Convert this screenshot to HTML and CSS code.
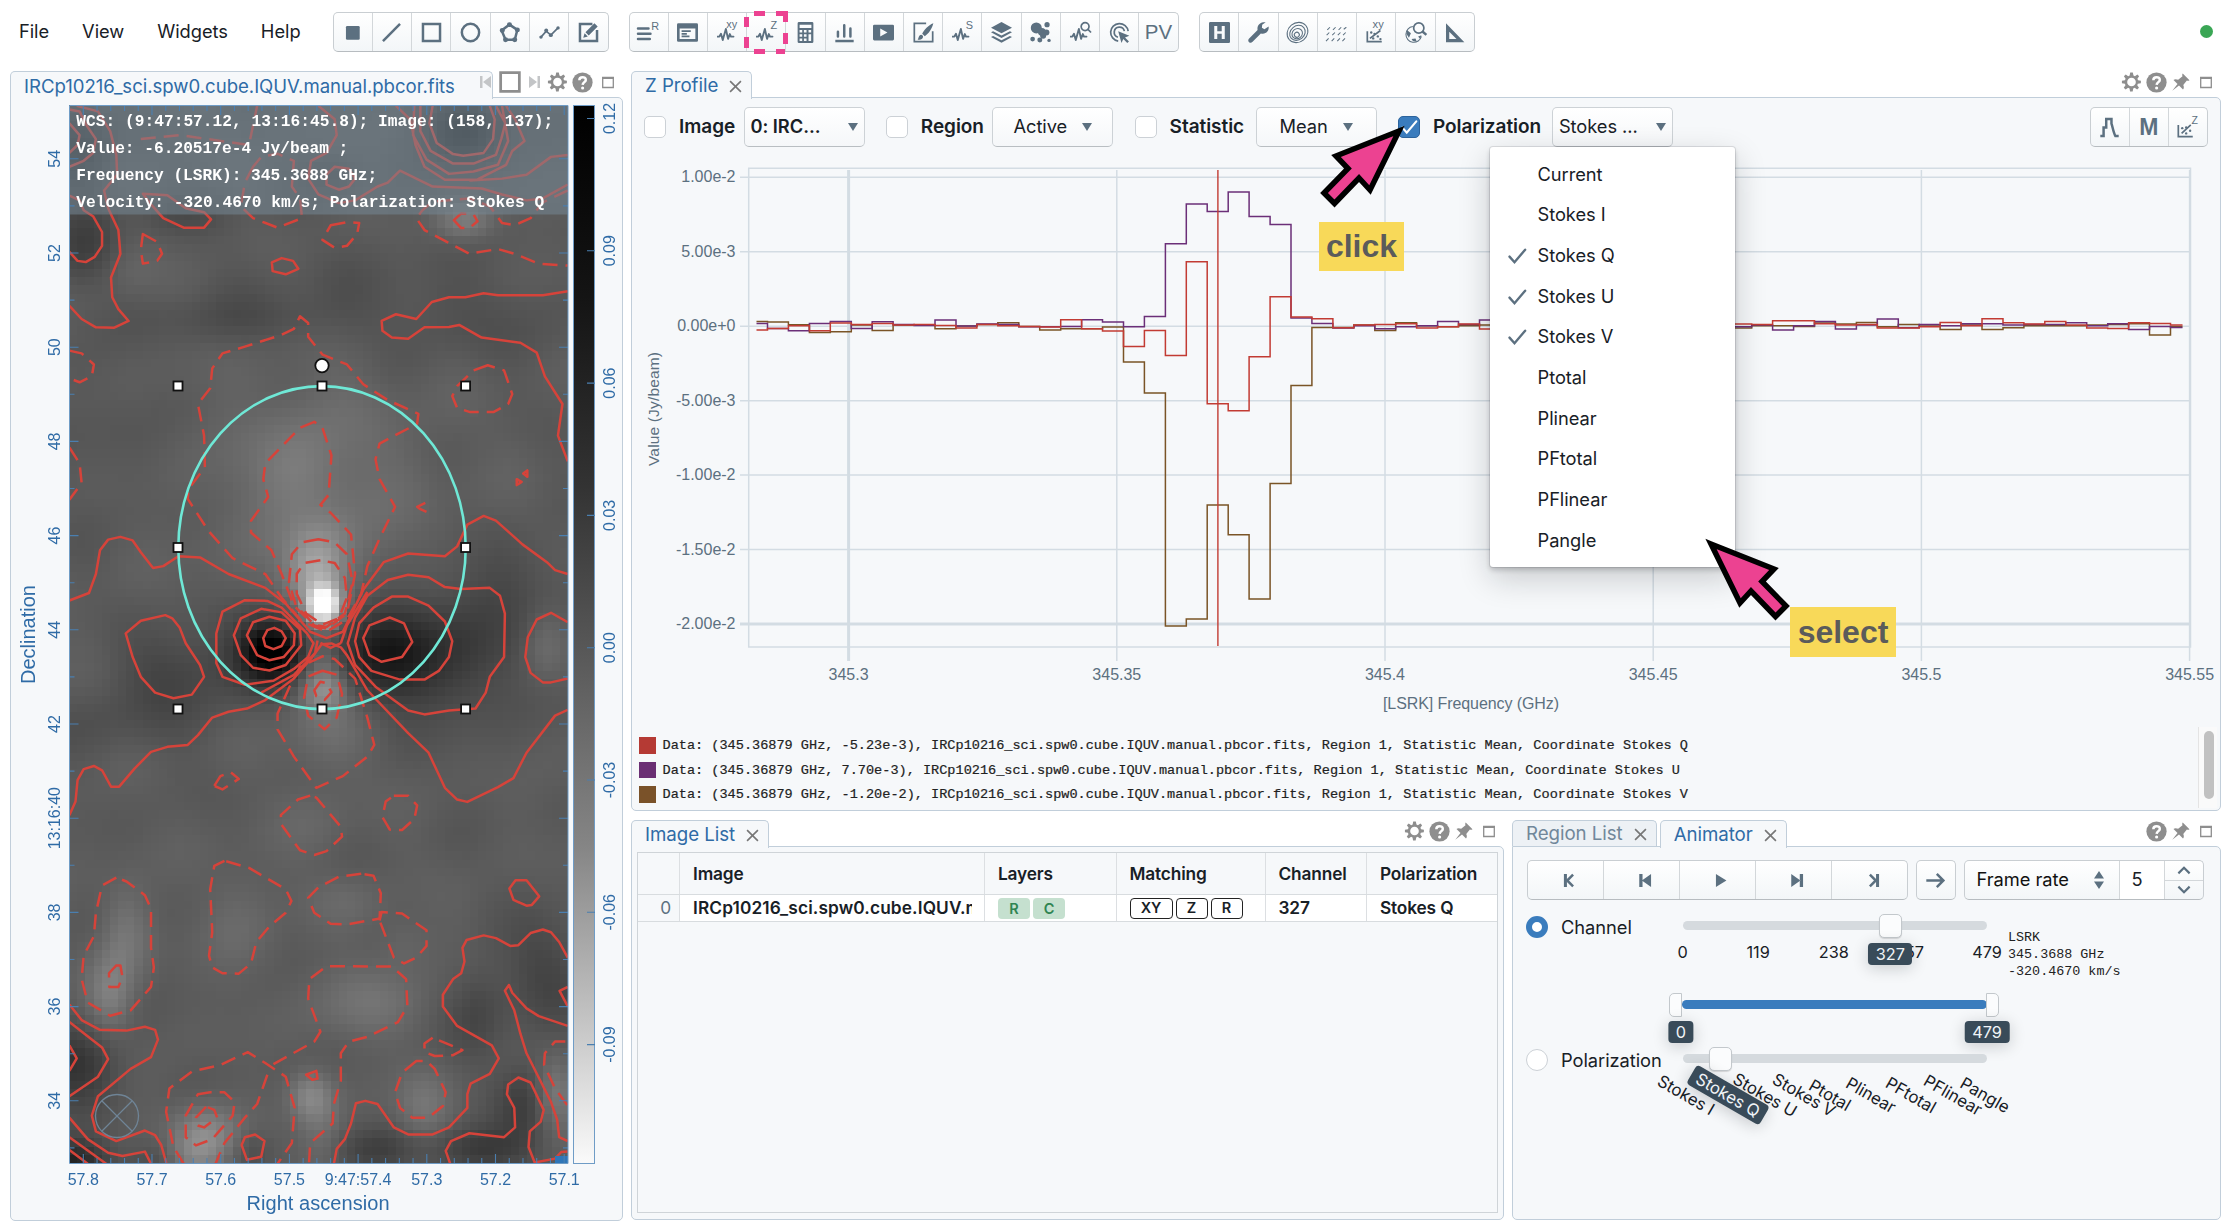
FILE: index.html
```html
<!DOCTYPE html>
<html lang="en">
<head>
<meta charset="utf-8">
<title>CARTA</title>
<link rel="stylesheet" href="styles.css">
</head>
<body>
<svg width="0" height="0" class="defs">
  <defs>
    <symbol id="pulse" viewBox="0 0 16 16"><path d="M0 10.5h2.2L3.6 8l1.6 5.6L8 3.6l2 9L11.6 8.2l1 2.3H15" fill="none" stroke="currentColor" stroke-width="1.7" stroke-linejoin="round" stroke-linecap="round"/></symbol>
    <symbol id="gear" viewBox="0 0 16 16"><path fill-rule="evenodd" d="M15.2 6.6 13 6.2l-.5-1.1 1.3-1.9-1.3-1.3-1.9 1.3L9.5 2.7 9 .4H7l-.4 2.3-1.1.5-1.9-1.3-1.4 1.3 1.3 1.9L3 6.2l-2.3.4v1.9l2.3.5.4 1.1-1.3 1.9 1.4 1.3 1.9-1.3 1.1.5.4 2.3h2l.4-2.3 1.1-.5 1.9 1.3 1.4-1.3-1.3-1.9.4-1.1 2.3-.5zM8 10.9a3.3 3.3 0 1 1 0-6.6 3.3 3.3 0 0 1 0 6.6z"/></symbol>
    <symbol id="help" viewBox="0 0 16 16"><circle cx="8" cy="8" r="7.7"/><path d="M5.6 6.2C5.6 3.2 10.6 3.3 10.5 6c0 1.7-2.3 1.8-2.4 3.8" fill="none" stroke="#fff" stroke-width="1.9"/><circle cx="8.1" cy="12.2" r="1.2" fill="#fff"/></symbol>
    <symbol id="pin" viewBox="0 0 16 16"><path d="M9.4 1.2c-.5.6-.5 1.4-.2 2.1L5.7 6.2C4.300 5.500 2.800 5.600 2 6.400l3.200 3.200L1 15l5.400-4.200 3.200 3.200c.8-.8.9-2.300.2-3.700l2.900-3.500c.700.3 1.500.2 2.100-.300z"/></symbol>
    <symbol id="box" viewBox="0 0 12 12"><path d="M.7 1h10.600v10H.7z" fill="none" stroke="currentColor" stroke-width="1.300"/><path d="M.2.500h11.600v2H.2z"/></symbol>
    <symbol id="close" viewBox="0 0 12 12"><path d="M1 1l10 10M11 1L1 11" stroke="#777" stroke-width="1.500" fill="none"/></symbol>
    <symbol id="check" viewBox="0 0 16 16"><path d="M2 8.500l4 4.500L14.500 3" stroke="currentColor" stroke-width="1.900" fill="none" stroke-linecap="round"/></symbol>
  </defs>
</svg>

<header class="toolbar">
  <nav class="menu"><a>File</a><a>View</a><a>Widgets</a><a>Help</a></nav>
  <div class="group regions">
    <b><svg viewBox="0 0 16 16"><rect x="3" y="3" width="10.500" height="10.500" rx="1"/></svg></b>
    <b><svg viewBox="0 0 16 16"><path class="ln" d="M1.500 14.500l13-13"/></svg></b>
    <b><svg viewBox="0 0 16 16"><path class="ln" d="M1.500 1.500h13v13h-13z"/></svg></b>
    <b><svg viewBox="0 0 16 16"><circle class="ln" cx="8" cy="8" r="6.600"/></svg></b>
    <b><svg viewBox="0 0 16 16"><path class="ln" d="M8 2l6 4-2 7.500H5L2 6.500z"/><circle cx="8" cy="2" r="1.900"/><circle cx="14" cy="6" r="1.900"/><circle cx="12" cy="13.500" r="1.900"/><circle cx="5" cy="13.500" r="1.900"/><circle cx="2.500" cy="6.500" r="1.900"/></svg></b>
    <b><svg viewBox="0 0 16 16"><path class="th" d="M1.500 11.500L5.500 7l3.500 3 5.500-5.500"/><circle cx="1.500" cy="11.500" r="1.300"/><circle cx="5.500" cy="6.500" r="1.500"/><circle cx="9" cy="10" r="1.500"/><circle cx="14.500" cy="4.500" r="1.300"/></svg></b>
    <b><svg viewBox="0 0 16 16"><path class="ln" d="M11 1.500H1.500v13h13V6"/><path d="M4 12l1-3.500 2.500 2.500zM5.700 7.800L12.500 1 15 3.500l-6.800 6.800z"/></svg></b>
  </div>
  <div class="group widgets">
    <b><svg viewBox="0 0 16 16"><path d="M0 5h8M0 9h9.500M0 13h9" class="ln lnr"/><text x="10" y="6" font-size="8.300">R</text></svg></b>
    <b><svg viewBox="0 0 16 16"><path fill-rule="evenodd" d="M1 1h14a1 1 0 0 1 1 1v12a1 1 0 0 1-1 1H1a1 1 0 0 1-1-1V2a1 1 0 0 1 1-1zm1 4v8h12V5z"/><path class="th" d="M3.500 7h7M3.500 9h4M3.500 11h6"/></svg></b>
    <b><svg viewBox="0 0 16 16"><use href="#pulse" width="13.500" height="14" y="2"/><text x="7" y="4.500" font-size="8.300">xy</text></svg></b>
    <b class="current"><svg viewBox="0 0 16 16"><use href="#pulse" width="13.500" height="14" y="2"/><text x="11" y="5.500" font-size="8.300">Z</text></svg></b>
    <b><svg viewBox="0 0 16 16"><path fill-rule="evenodd" d="M3 0h10a1 1 0 0 1 1 1v14a1 1 0 0 1-1 1H3a1 1 0 0 1-1-1V1a1 1 0 0 1 1-1zm.500 2v2.500h9V2zm0 4v2h2V6zm3.300 0v2h2V6zm3.500 0v2h2V6zM3.500 9.300v2h2v-2zm3.300 0v2h2v-2zm3.500 0v5.200h2V9.300zM3.500 12.500v2h2v-2zm3.300 0v2h2v-2z"/></svg></b>
    <b><svg viewBox="0 0 16 16"><path class="ln" d="M1 14.500h14"/><path class="ln lnr" stroke-width="2.200" d="M3 7.500V11M7.800 2.500V11M12.500 5V11"/></svg></b>
    <b><svg viewBox="0 0 16 16"><path fill-rule="evenodd" d="M1 2h14a1 1 0 0 1 1 1v10a1 1 0 0 1-1 1H1a1 1 0 0 1-1-1V3a1 1 0 0 1 1-1zm4.500 3v6L11 8z"/></svg></b>
    <b><svg viewBox="0 0 16 16"><path class="th" d="M10 1H1v14h14V7"/><path d="M3.500 13.500c1-1 .5-3.500 2.800-3.800 1.300.2 1.800 1.500 1 2.600-.800 1-2.300 1.300-3.800 1.200zM7 9c1.500-3 4.500-6.500 8.500-8-1 4-3.500 8-6.500 9.800z"/></svg></b>
    <b><svg viewBox="0 0 16 16"><use href="#pulse" width="13.500" height="14" y="2"/><text x="10.500" y="5.500" font-size="8.300">S</text></svg></b>
    <b><svg viewBox="0 0 16 16"><path d="M8 0l8 4.300-8 4.200-8-4.200zM1.600 7L8 10.300 14.400 7l1.600.9-8 4.300L0 7.900zM1.600 10.600L8 13.900l6.400-3.300 1.600.9L8 15.800 0 11.500z"/></svg></b>
    <b><svg viewBox="0 0 16 16"><circle cx="4.800" cy="4.500" r="4.200"/><circle cx="9" cy="7.500" r="3"/><circle cx="12.500" cy="8" r="2.300"/><circle cx="10" cy="10.500" r="2.300"/><circle cx="13" cy="2" r="2"/><circle cx="2" cy="13" r="1.800"/><circle cx="7.500" cy="13.800" r="1.900"/><circle cx="14.500" cy="14" r="1.300"/></svg></b>
    <b><svg viewBox="0 0 16 16"><use href="#pulse" width="13.500" height="14" y="2"/><circle class="th" cx="11.500" cy="3.500" r="3"/><path class="th" d="M13.500 5.500l2.500 2.500"/></svg></b>
    <b><svg viewBox="0 0 16 16"><path class="th" d="M7 14.500A6.700 6.700 0 1 1 14.600 7M6.800 11.600A3.900 3.900 0 1 1 11.700 7"/><path d="M7 7l8.500 3.500-3.300 1.300 3 3-1.300 1.200-3-3L9.500 16z"/></svg></b>
    <b class="pv">PV</b>
  </div>
  <div class="group dialogs">
    <b><svg viewBox="0 0 16 16"><path fill-rule="evenodd" d="M1 0h14a1 1 0 0 1 1 1v14a1 1 0 0 1-1 1H1a1 1 0 0 1-1-1V1a1 1 0 0 1 1-1zm3 3v10h2.300V9h3.400v4H12V3H9.700v4H6.300V3z"/></svg></b>
    <b><svg viewBox="0 0 16 16"><path d="M15.700 3.500l-3.200 2-1.900-1.200L10.800 2 13.500.200C11 -.3 7.500 1 7.200 4.500c0 .8 0 1.200.1 1.600L.700 12.700c-1.600 1.900.9 4 2.600 2.600l6.500-6.600c3.500 1 6.500-1.700 5.900-5.200z"/></svg></b>
    <b><svg viewBox="0 0 16 16"><g transform="rotate(-40 8 8)"><ellipse class="hair" cx="8" cy="8" rx="8.300" ry="7.300"/><ellipse class="hair" cx="7.800" cy="8.200" rx="6.300" ry="5.300"/><ellipse class="hair" cx="7.300" cy="8.500" rx="4.200" ry="3.700"/><circle class="hair" cx="6.500" cy="9" r="1.900"/></g></svg></b>
    <b><svg viewBox="0 0 16 16"><path class="hair" d="M1 6l2-2M5.300 6l2-2M9.600 6l2-2M13.500 5.500l2-1.500M.500 10l2-2M4.800 10l2-2M9 10l2-2M13 10l2-2M0 14.500l2-2M4.300 14.500l2-2M8.600 14.500l2-2M12.500 14.500l2-2"/></svg></b>
    <b><svg viewBox="0 0 16 16"><path class="th" d="M1 7v8h11M3 12.500l8-6"/><circle cx="4" cy="8" r=".9"/><circle cx="6.500" cy="9" r=".9"/><circle cx="5.500" cy="12.500" r=".9"/><circle cx="9" cy="11" r=".9"/><circle cx="11" cy="13" r=".9"/><text x="5" y="4.500" font-size="8.500">xy</text></svg></b>
    <b><svg viewBox="0 0 16 16"><path class="hair" d="M6 3.500A6 6 0 1 0 12.500 11"/><path d="M1.500 6l3 2.500L3 12l-2-3zM5 13l3-.5 1 2.500-3-.5zM10 11l2.500-1-1 3z"/><circle class="th" cx="10.500" cy="4.500" r="3.900"/><path class="ln" d="M13.300 7.300l3 2.500"/></svg></b>
    <b><svg viewBox="0 0 16 16"><path fill-rule="evenodd" d="M1.500 1v14.500h14zM4 7.500V13h5.500z"/></svg></b>
  </div>
  <i class="status"></i>
</header>

<main class="workspace">
  <section class="panel viewer">
    <div class="tabs"><div class="tab">IRCp10216_sci.spw0.cube.IQUV.manual.pbcor.fits</div>
      <div class="tools"><svg class="t-nav" viewBox="0 0 12 16"><path d="M0 2h2.500v12H0zM11 2v12L3 8z"/></svg><svg class="t-sq" viewBox="0 0 20 20"><path d="M1.500 1.500h17v17h-17z"/></svg><svg class="t-nav" viewBox="0 0 12 16"><path d="M9.500 2H12v12H9.500zM1 2v12l8-6z"/></svg><svg class="t-i"><use href="#gear"/></svg><svg class="t-i"><use href="#help"/></svg><svg class="t-box"><use href="#box"/></svg></div></div>
    <div class="body">
      <canvas id="raster" width="61" height="129"></canvas>
      <svg class="plot" viewBox="10 98 613 1122">
        <defs>
          <clipPath id="imgclip"><rect x="69.500" y="105.500" width="498.500" height="1058"/></clipPath>
          <linearGradient id="bar" x1="0" y1="0" x2="0" y2="1"><stop offset="0" stop-color="#000"/><stop offset=".18" stop-color="#141414"/><stop offset=".36" stop-color="#333"/><stop offset=".52" stop-color="#595959"/><stop offset=".7" stop-color="#858585"/><stop offset=".86" stop-color="#c2c2c2"/><stop offset="1" stop-color="#fafafa"/></linearGradient>
        </defs>
        <g clip-path="url(#imgclip)">
          <g class="contour" transform="translate(0 60) scale(.40816 .39541)">
            <path d="M170 125L195 130 212 165 235 200 228 235 205 255 170 270M170 160L195 190 190 215 170 235M188 116L240 130 270 180 285 240 287 290 255 330 265 375 290 430 295 490 272 550 275 600 290 630 315 660 280 677 235 676 200 655 170 622M170 343L195 355 205 380 228 395 250 435 250 470 232 498 210 511 190 508 170 485M350 338L410 342 455 375 500 385 517 403 500 424 450 424 400 400 370 365Z"/>
            <path d="M1060 116L1052 160 1070 210 1110 238 1135 242 1185 235 1208 200 1212 150 1200 116M1030 116L1030 180 1055 230 1110 262 1160 262 1215 240 1228 200 1238 160 1215 116M1015 116L1012 190 1045 252 1100 288 1160 282 1220 265 1245 205 1230 116M970 116L1005 150 1018 215 1040 270 1090 303 1170 302 1240 265 1255 230 1285 205 1262 150 1240 116M780 116L820 150 825 190 800 235 762 255 755 300 780 340 830 362 870 355 925 320 950 310 980 280 1060 320 1180 325 1230 340 1290 355 1330 350 1391 315M1391 240L1350 245 1290 290 1230 300 1150 305M800 290L820 270 855 275 870 300 855 320 830 328 800 315Z"/>
            <path class="dash" d="M620 270L600 310 590 370 620 400 680 424 740 400 735 350 715 320 720 255 680 237 640 245ZM345 200L440 190 510 200 610 215 630 116M810 418L850 410 880 412 875 440 850 470 820 475 790 455ZM1112 405L1130 388 1160 390 1170 408 1150 425 1130 425ZM1391 330L1330 360 1300 400 1260 418 1230 412 1200 370 1150 350 1060 358 1035 380 1020 400 1040 430 1150 490 1220 478 1260 490 1320 515 1391 520M350 440L385 460 397 490 385 508 350 515 345 480Z"/>
            <path d="M666 512L690 501 718 508 731 528 700 542 668 534ZM1391 585L1330 595 1220 595 1185 590 1140 600 1100 600 1058 612 1020 655 970 643 935 660 937 685 960 702 1000 705 1040 676 1100 675 1125 670 1180 702 1275 715 1315 740 1335 800 1378 870 1367 950 1391 1015M1266 1060l12 7-12 8zM1282 1046l10-8v16zM1042 1120l-20 10 8 6 15 7"/>
            <path class="dash" d="M755 665L735 648 720 680 690 695 600 725 545 742 520 780 515 830 485 870 500 950 502 1030 462 1085 460 1110 510 1190 570 1260 650 1300 690 1360 740 1420 800 1446 850 1415 885 1350 900 1280 930 1210 968 1130 930 1060 920 1010 930 970 1022 920 1025 895 950 860 890 820 850 770 790 745 755 700ZM770 915L735 930 650 1020 645 1060 657 1105 615 1165 615 1195 665 1240 690 1300 720 1380 770 1430 800 1438 850 1400 870 1300 860 1200 810 1145 785 1125 805 1100 812 1000 790 930ZM780 1212L740 1220 715 1250 708 1320 725 1380 770 1428 800 1434 845 1400 864 1320 850 1250 820 1220ZM785 1265L745 1272 727 1300 727 1350 750 1400 790 1428 830 1412 850 1360 845 1310 820 1272ZM170 735L200 742 230 770 225 800 195 815 170 805M170 980L195 1020 200 1070 170 1112M1195 772L1160 785 1120 825 1108 850 1120 880 1150 890 1210 890 1245 870 1255 845 1235 785Z"/>
            <path d="M170 1367L218 1348 235 1300 245 1240 265 1213 295 1206 325 1215 345 1245 375 1285 400 1280 437 1255 490 1258 560 1300 650 1335 700 1375 760 1446 800 1462 840 1446 890 1340 940 1270 1000 1248 1090 1255 1120 1230 1145 1175 1185 1153 1215 1165 1280 1225 1340 1270 1360 1290 1391 1300"/>
            <path d="M645 1462L655 1442 672 1436 690 1445 700 1462 690 1482 670 1490 650 1482ZM605 1455L620 1422 660 1408 700 1418 722 1450 720 1480 695 1510 660 1518 630 1505ZM573 1455L590 1412 640 1388 690 1397 735 1440 738 1480 700 1530 660 1544 620 1537 590 1505ZM530 1450L545 1395 600 1366 655 1368 690 1385 752 1450 768 1475 755 1510 720 1540 670 1570 600 1580 545 1560 530 1525ZM890 1462L905 1430 955 1410 990 1425 1010 1472 985 1510 935 1522 905 1505ZM870 1470L880 1425 915 1385 960 1357 1000 1357 1050 1380 1090 1420 1108 1470 1100 1510 1075 1545 1040 1567 980 1567 910 1545 880 1510ZM640 1600L720 1555 772 1500 778 1468M852 1475L870 1410 900 1355 950 1315 1000 1302 1050 1308 1090 1333 1130 1338 1200 1335 1225 1355 1237 1400 1235 1510 1200 1560 1190 1600 1165 1640 1100 1645 1040 1655 1000 1645 920 1585 870 1530ZM835 1475L850 1430 900 1345M785 1474L810 1487 835 1475"/>
            <path d="M308 1450L345 1418 405 1404 422 1412 440 1435 455 1475 490 1530 500 1560 470 1605 425 1614 380 1600 345 1560 325 1510ZM1391 1422L1350 1398 1315 1415 1293 1460 1287 1510 1300 1550 1330 1574 1350 1574 1391 1564"/>
          </g>
          <g class="contour" transform="translate(0 620) scale(.40816 .39032)">
            <path d="M170 500L185 465 190 410 205 382 230 374 250 385 272 427 292 427 330 380 370 338 410 325 460 320 485 295 520 250 560 235 605 227 650 205 720 150 765 95 788 62 812 60 835 70 850 90 900 180 1000 290 1050 340 1090 430 1120 460 1145 466 1220 428 1258 405 1290 340 1360 245 1391 230"/>
            <path class="dash" d="M790 93L735 120 710 170 680 240 680 280 720 350 775 430 840 400 900 350 917 320 900 250 870 150 820 100ZM790 130L755 145 745 200 755 245 795 280 825 250 838 190 825 140ZM770 180L785 158 800 162 812 185 795 205 775 195ZM525 425L540 400 565 390 585 407 545 434ZM760 450L730 460 688 500 690 525 735 590 770 602 800 592 838 555 835 530 775 455ZM965 450L1000 450 1022 475 1015 510 985 538 955 537 937 505 945 465ZM550 617L525 630 515 690 520 800 512 860 520 890 545 905 585 906 615 880 628 825 660 785 700 750 714 720 700 690 610 635ZM285 660L250 680 235 750 230 810 205 860 200 920 215 980 270 1014 320 1000 370 940 377 890 370 840 370 740 355 705 310 670ZM285 885L267 905 268 940 290 940 300 915 295 885ZM885 650L830 658 780 685 755 712 770 750 810 778 850 780 930 765 933 700 915 655ZM930 770L935 748 985 752 1045 795 1045 835 1020 865 990 880 965 865ZM670 1138L770 1080 785 1055 755 970 758 920 800 887 960 888 995 920 998 990 975 1030 900 1068 855 1080 835 1110 835 1180 818 1240 815 1290 760 1340 757 1393"/>
            <path class="dash" d="M450 1393L425 1350 407 1260 415 1200 470 1157 540 1140 570 1125 607 1107 650 1135 700 1170 722 1250 715 1340 680 1393M655 1165L630 1240 600 1275 550 1340 528 1393M515 1210L485 1215 455 1270 455 1325 480 1346 520 1330 570 1270 575 1235 550 1210ZM505 1247L480 1275 485 1295 500 1300 532 1275 525 1255ZM1385 1080L1360 1080 1335 1110 1333 1140 1360 1200 1391 1245M1020 1130L985 1160 968 1210 980 1250 1010 1275 1050 1275 1085 1245 1092 1210 1065 1150 1045 1130ZM1060 1070L1040 1085 1040 1107 1065 1117 1110 1115 1133 1102Z"/>
            <path d="M1263 667L1248 688 1258 717 1290 732 1303 730 1321 708 1290 667ZM600 1325L625 1318 648 1335 640 1375 605 1383 592 1345ZM750 1165l25-10 3 20-13 3zM818 1393L825 1355 845 1330 860 1290 872 1238 895 1232 925 1240 965 1300 1000 1318 1060 1318 1100 1300 1145 1250 1145 1215 1153 1188 1200 1163 1222 1123 1205 1090 1120 1040 1085 990 1085 960 1110 920 1130 905 1138 875 1133 840 1143 820 1185 808 1215 815 1250 835 1270 833 1300 802 1330 793 1350 800 1370 825 1391 865M1391 1040L1320 1015 1290 995 1255 955 1247 935 1237 950 1260 1000 1275 1060 1290 1110 1350 1235 1365 1280 1370 1325 1391 1335M1391 940L1371 950 1391 990M1103 1393L1092 1360 1105 1335 1150 1315 1235 1325 1262 1300 1260 1250 1242 1215 1245 1190 1270 1172 1300 1185 1332 1255 1325 1285 1298 1310 1295 1350 1310 1390 1360 1380 1375 1363 1391 1362M170 985L200 1025 245 1050 310 1052 355 1042 380 1050 387 1075 370 1120 320 1150 240 1220 225 1270 235 1310 285 1335 355 1308 380 1320 395 1345 408 1393M170 1030L250 1095 265 1125 240 1170 170 1220M170 1090L188 1123 170 1155M170 1275L215 1330 265 1365 300 1373 355 1362 370 1393M170 1325L260 1393M170 1358L215 1393"/>
          </g>
          <rect x="555" y="1156" width="13" height="8" fill="#2f76b8"/>
        </g>
        <rect x="69.500" y="105.500" width="498" height="109" fill="#7486948c"/>
        <g class="info"><text x="76.300" y="125.500" textLength="477">WCS: (9:47:57.12, 13:16:45.8); Image: (158, 137);</text><text x="76.300" y="152.500" textLength="272">Value: -6.20517e-4 Jy/beam ;</text><text x="76.300" y="179.500" textLength="301">Frequency (LSRK): 345.3688 GHz;</text><text x="76.300" y="207" textLength="468">Velocity: -320.4670 km/s; Polarization: Stokes Q</text></g>
        <rect x="573.500" y="105.500" width="21" height="1058" fill="url(#bar)" stroke="#6f9cc6"/>
        <ellipse cx="322" cy="547.600" rx="143.700" ry="161.500" fill="none" stroke="#6fe8d6" stroke-width="2.600"/>
        <g id="handles" class="handles"><circle cx="322" cy="365.600" r="6.700"/></g>
        <g fill="none" stroke="#6f8496" stroke-width="1.300"><circle cx="117" cy="1116" r="21.500"/><path d="M102 1101l30 30M132 1101l-30 30"/></g>
        <g id="skylabels" class="sky"></g>
        <text class="skytitle" x="318" y="1210" textLength="143">Right ascension</text>
        <text class="skytitle" transform="translate(35 634.500) rotate(-90)" textLength="99">Declination</text>
      </svg>
    </div>
  </section>

  <div class="right">
    <section class="panel zprofile">
      <div class="tabs"><div class="tab">Z Profile<svg class="x"><use href="#close"/></svg></div>
        <div class="tools"><svg class="t-i"><use href="#gear"/></svg><svg class="t-i"><use href="#help"/></svg><svg class="t-pin"><use href="#pin"/></svg><svg class="t-box"><use href="#box"/></svg></div></div>
      <div class="body">
        <div class="controls">
          <div class="field f1"><i class="cb"></i><label>Image</label><span class="sel strong"><em>0: IRC...</em><u></u></span></div>
          <div class="field f2"><i class="cb"></i><label>Region</label><span class="sel mid"><em>Active</em><u></u></span></div>
          <div class="field f3"><i class="cb"></i><label>Statistic</label><span class="sel mid"><em>Mean</em><u></u></span></div>
          <div class="field f4"><i class="cb on"><svg><use href="#check"/></svg></i><label>Polarization</label><span class="sel"><em>Stokes ...</em><u></u></span></div>
          <div class="group actions">
            <b><svg viewBox="0 0 16 16"><path class="ln" d="M1 14.500h2.500V8h2V1.500h4v3.500c1 3 1.500 7 3 9.500H15"/></svg></b>
            <b class="m">M</b>
            <b><svg viewBox="0 0 16 16"><path class="th" d="M1 6v9h11M3.500 12.500l7-6.500"/><circle cx="4" cy="8.500" r=".9"/><circle cx="7" cy="8" r=".9"/><circle cx="7" cy="12.500" r=".9"/><circle cx="10" cy="10.500" r=".9"/><text x="11" y="5" font-size="8">Z</text></svg></b>
          </div>
        </div>
        <svg class="chart" viewBox="632 160 1589 560">
          <g id="grid"></g>
          <g class="series"><path id="sv" stroke="#7a5426"/><path id="su" stroke="#6b2f78"/><path id="sq" stroke="#c23b33"/></g>
          <path d="M1218.900 170V646" stroke="#c23b33" stroke-width="1.400"/>
          <text x="1472" y="709" text-anchor="middle" textLength="176">[LSRK] Frequency (GHz)</text>
          <text transform="translate(660 409) rotate(-90)" text-anchor="middle" textLength="114" font-size="15.500">Value (Jy/beam)</text>
        </svg>
        <div class="legend">
          <ul>
            <li><i class="q"></i>Data: (345.36879 GHz, -5.23e-3), IRCp10216_sci.spw0.cube.IQUV.manual.pbcor.fits, Region 1, Statistic Mean, Coordinate Stokes Q</li>
            <li><i class="u"></i>Data: (345.36879 GHz, 7.70e-3), IRCp10216_sci.spw0.cube.IQUV.manual.pbcor.fits, Region 1, Statistic Mean, Coordinate Stokes U</li>
            <li><i class="v"></i>Data: (345.36879 GHz, -1.20e-2), IRCp10216_sci.spw0.cube.IQUV.manual.pbcor.fits, Region 1, Statistic Mean, Coordinate Stokes V</li>
          </ul>
          <div class="scroll"><i></i></div>
        </div>
      </div>
    </section>

    <div class="lower">
      <section class="panel imagelist">
        <div class="tabs"><div class="tab">Image List<svg class="x"><use href="#close"/></svg></div>
          <div class="tools"><svg class="t-i"><use href="#gear"/></svg><svg class="t-i"><use href="#help"/></svg><svg class="t-pin"><use href="#pin"/></svg><svg class="t-box"><use href="#box"/></svg></div></div>
        <div class="body">
          <div class="table">
            <div class="row head"><span></span><span>Image</span><span>Layers</span><span>Matching</span><span>Channel</span><span>Polarization</span></div>
            <div class="row"><span class="idx">0</span><span class="clip"><s>IRCp10216_sci.spw0.cube.IQUV.manual.pbcor.fits</s></span><span class="tags"><i class="g">R</i><i class="g">C</i></span><span class="tags"><i class="o xy">XY</i><i class="o">Z</i><i class="o">R</i></span><span>327</span><span>Stokes Q</span></div>
          </div>
        </div>
      </section>

      <section class="panel animator">
        <div class="tabs"><div class="tab off">Region List<svg class="x"><use href="#close"/></svg></div><div class="tab">Animator<svg class="x"><use href="#close"/></svg></div>
          <div class="tools"><svg class="t-i"><use href="#help"/></svg><svg class="t-pin"><use href="#pin"/></svg><svg class="t-box"><use href="#box"/></svg></div></div>
        <div class="body">
          <div class="playback">
            <div class="group play">
              <b><svg viewBox="0 0 16 16"><path d="M4.500 3h2.300v10H4.500z"/><path class="ln" d="M11.500 3.500L7 8l4.500 4.500"/></svg></b>
              <b><svg viewBox="0 0 16 16"><path d="M4 3h2.500v10H4zM13 3v10L6 8z"/></svg></b>
              <b><svg viewBox="0 0 16 16"><path d="M4.500 3v10L12.500 8z"/></svg></b>
              <b><svg viewBox="0 0 16 16"><path d="M10.500 3H13v10h-2.500zM4 3v10l7-5z"/></svg></b>
              <b><svg viewBox="0 0 16 16"><path d="M10.700 3H13v10h-2.300z"/><path class="ln" d="M6 3.500L10.500 8 6 12.500"/></svg></b>
            </div>
            <div class="group one"><b><svg viewBox="0 0 16 16"><path class="ln" d="M1 8h13M9 3l5 5-5 5"/></svg></b></div>
            <div class="group rate"><span class="rsel">Frame rate<svg viewBox="0 0 10 18"><path d="M5 0l5 7.500H0zM5 18L0 10.500h10z"/></svg></span><span class="num">5</span><span class="spin"><b><svg viewBox="0 0 16 16"><path class="ln" d="M3 11l5-5 5 5"/></svg></b><b><svg viewBox="0 0 16 16"><path class="ln" d="M3 5l5 5 5-5"/></svg></b></span></div>
          </div>
          <div class="anim channel">
            <i class="radio on"></i><label>Channel</label>
            <div class="slider"><div class="track"></div><div class="knob" style="left:68.27%"></div>
              <div class="marks"><span style="left:0">0</span><span style="left:24.84%">119</span><span style="left:49.69%">238</span><span style="left:74.53%">357</span><span style="left:100%">479</span></div>
              <div class="tip" style="left:68.27%">327</div></div>
            <pre>LSRK
345.3688 GHz
-320.4670 km/s</pre>
          </div>
          <div class="anim range">
            <div class="slider"><div class="track full"></div><div class="half l"></div><div class="half r"></div><div class="tip" style="left:-.5%">0</div><div class="tip" style="left:100%">479</div></div>
          </div>
          <div class="anim pol">
            <i class="radio"></i><label>Polarization</label>
            <div class="slider"><div class="track"></div><div class="knob" style="left:12.5%"></div>
              <div class="slant"><span style="left:1.200%">Stokes I</span><span style="left:27%">Stokes U</span><span style="left:39.800%">Stokes V</span><span style="left:48.500%">Ptotal</span><span style="left:62%">Plinear</span><span style="left:75%">PFtotal</span><span style="left:88.700%">PFlinear</span><span style="left:99.300%">Pangle</span><span class="sel-tip" style="left:15%">Stokes Q</span></div></div>
          </div>
        </div>
      </section>
    </div>
  </div>
</main>

<ul class="dropdown">
  <li>Current</li><li>Stokes I</li><li><svg><use href="#check"/></svg>Stokes Q</li><li><svg><use href="#check"/></svg>Stokes U</li><li><svg><use href="#check"/></svg>Stokes V</li><li>Ptotal</li><li>Plinear</li><li>PFtotal</li><li>PFlinear</li><li>Pangle</li>
</ul>
<svg class="arrow a1" viewBox="0 0 90 90"><path d="M80 10L17 35 29 47.500 5 72 15.500 82.500 40 57 51 69z"/></svg>
<svg class="arrow a2" viewBox="0 0 90 90"><path d="M80 10L17 35 29 47.500 5 72 15.500 82.500 40 57 51 69z"/></svg>
<div class="callout c1">click</div>
<div class="callout c2">select</div>
<script src="main.js"></script>
</body>
</html>
```
FILE: styles.css
```css
* { box-sizing: border-box; }
body { margin: 0; width: 2232px; height: 1232px; overflow: hidden; background: #fff; color: #182026; font: 18.300px/1.2 Inter, "Liberation Sans", sans-serif; letter-spacing: -.05px; position: relative; }
i, em, u, s { font-style: normal; text-decoration: none; }
ul { list-style: none; margin: 0; padding: 0; }
b { font-weight: 400; }
.defs { position: absolute; }
svg { display: block; fill: currentColor; flex: none; }

.toolbar { height: 71px; display: flex; align-items: flex-start; padding: 12px 0 0 19px; }
.menu { width: 313.500px; height: 40px; display: flex; align-items: center; gap: 33px; }
.group { display: flex; height: 40px; border: 1.300px solid #c9ced2; border-bottom-color: #b7bcc0; border-radius: 5px; background: linear-gradient(#fff, #f3f6f8); color: #5c7080; overflow: hidden; }
.group > b { flex: 1; display: flex; align-items: center; justify-content: center; border-left: 1.300px solid #d3d7da; }
.group > b:first-child { border-left: 0; }
.group svg { width: 21px; height: 21px; overflow: visible; }
.group svg text { font-family: "Liberation Sans", sans-serif; letter-spacing: 0; }
.ln { fill: none; stroke: currentColor; stroke-width: 1.900; }
.lnr { stroke-linecap: round; }
.th { fill: none; stroke: currentColor; stroke-width: 1.300; }
.hair { fill: none; stroke: currentColor; stroke-width: .8; }
.regions { width: 276px; margin-right: 20px; }
.widgets { width: 550px; margin-right: 20.500px; overflow: visible; }
.dialogs { width: 276px; }
.pv { font: 20.500px "Liberation Sans", sans-serif; }
.current { position: relative; }
.current::after { content: ""; position: absolute; inset: -2px -3px -3px -3px; background:
  linear-gradient(#ec4291 0 0) 10px 0/11px 5px, linear-gradient(#ec4291 0 0) 32px 0/9px 5px, linear-gradient(#ec4291 0 0) 10px 100%/11px 5px, linear-gradient(#ec4291 0 0) 32px 100%/9px 5px,
  linear-gradient(#ec4291 0 0) 0 6px/5px 10px, linear-gradient(#ec4291 0 0) 0 26px/5px 11px, linear-gradient(#ec4291 0 0) 100% 0/5px 11px, linear-gradient(#ec4291 0 0) 100% 22px/5px 11px; background-repeat: no-repeat; }
.status { width: 13px; height: 13px; border-radius: 50%; background: #3aa655; margin: 13px 0 0 725px; }

.workspace { margin-left: 10px; display: grid; grid-template-columns: 613px 1590px; column-gap: 8px; height: 1149.500px; }
.right { display: flex; flex-direction: column; gap: 9.500px; }
.lower { display: grid; grid-template-columns: 872.500px 709px; column-gap: 8.500px; height: 400px; }
.panel { display: flex; flex-direction: column; min-height: 0; min-width: 0; }
.zprofile { height: 739.500px; }
.tabs { height: 26px; display: flex; gap: 3px; flex: none; }
.tab { position: relative; z-index: 1; height: 27.500px; padding: 2px 9px 0 13px; border: 1.500px solid #c1ceda; border-bottom: 0; border-radius: 5px 5px 0 0; background: #f6f8fa; color: #2f6ba6; font-size: 18.700px; display: flex; align-items: center; white-space: nowrap; }
.tab.off { background: #edf1f5; color: #71879a; height: 26px; }
.x { width: 13px; height: 13px; margin-left: 11px; }
.tools { margin-left: auto; display: flex; align-items: center; color: #8e8e8e; height: 22px; padding-right: 9px; }
.t-i { width: 21px; height: 21px; margin-right: 4px; }
.t-pin { width: 20px; height: 20px; margin: 0 13px 0 0; }
.tools > .t-pin { margin-right: 9px; }
.t-box { width: 12px; height: 13px; }
.body { flex: 1; min-height: 0; border: 1.500px solid #c1ceda; border-radius: 0 5px 5px 5px; background: #f6f8fa; position: relative; }

.viewer .tab { width: 482.500px; font-size: 18.600px; letter-spacing: -.03px; }
.viewer .tools { margin-left: -16px; position: relative; z-index: 2; gap: 7px; padding-right: 9px; }
.viewer .t-i { margin: 0 -3px 0 0; }
.viewer .t-box { margin-left: 5px; }
.t-nav { width: 12px; height: 18px; fill: #c3c5c7; }
.t-sq { width: 22px; height: 22px; fill: none; stroke: #8e8e8e; stroke-width: 2.500; }
#raster { position: absolute; left: 58px; top: 7px; width: 498.500px; height: 1058px; image-rendering: pixelated; }
.plot { position: absolute; left: -1.500px; top: -.5px; width: 613px; height: 1122px; }
.contour path { fill: none; stroke: #d6433a; stroke-width: 2.500; stroke-linejoin: round; vector-effect: non-scaling-stroke; }
.contour .dash { stroke-dasharray: 15 8; }
.sky { font: 16px "Liberation Sans", sans-serif; letter-spacing: 0; fill: #2f6ba6; text-anchor: middle; }
.skytitle { font: 20px "Liberation Sans", sans-serif; letter-spacing: 0; fill: #2f6ba6; text-anchor: middle; }
.info { font: bold 16.200px "Liberation Mono", monospace; letter-spacing: 0; fill: #fff; }
.handles { fill: #fff; stroke: #111; stroke-width: 1.800; }

.controls { display: flex; align-items: center; gap: 21.300px; padding: 9px 12px 0 12px; height: 49px; }
.field { display: flex; align-items: center; height: 40px; }
.field label { flex: 1; padding-left: 13px; font-size: 19px; font-weight: 600; letter-spacing: -.05px; }
.f1 { width: 220.500px; } .f2 { width: 227.500px; } .f3 { width: 242px; } .f4 { width: 275px; }
.cb { width: 22px; height: 22px; border: 1.300px solid #ccd1d6; border-radius: 5px; background: #fff; }
.cb.on { background: #3a7cbd; border-color: #2c639c; color: #fff; }
.cb svg { width: 18px; height: 18px; margin: 1px; }
.sel { width: 121px; height: 40px; display: flex; align-items: center; justify-content: space-between; padding: 0 6px; border: 1.300px solid #cdd2d6; border-bottom-color: #b9bec2; border-radius: 5px; background: linear-gradient(#fff, #f5f7f9); }
.sel.mid { justify-content: center; gap: 15px; padding: 0; }
.strong em { font-weight: 600; }
.sel u { border: 5.500px solid transparent; border-top: 8px solid #5c7080; border-bottom: 0; }
.actions { width: 118.500px; margin-left: auto; }
.m { font: bold 23px "Liberation Sans", sans-serif; }
.chart { width: 1589px; height: 560px; margin: 13px 0 0 -1px; font: 16px "Liberation Sans", sans-serif; letter-spacing: 0; fill: #5c7080; }
.chart path { fill: none; }
.series path { stroke-width: 1.500; }
.grid { stroke: #d3dce3; stroke-width: 1.500; }
.grid.major { stroke-width: 3; }
.legend { display: flex; justify-content: space-between; height: 87px; padding: 13.500px 3px 0 7px; }
.legend li { display: flex; align-items: center; height: 24.400px; white-space: pre; font: 13.570px "Liberation Mono", monospace; letter-spacing: 0; color: #222; -webkit-text-stroke: .2px #222; }
.legend i { width: 17px; height: 16.500px; margin-right: 6.500px; }
.q { background: #b53a34; } .u { background: #6b2f74; } .v { background: #7a5229; }
.scroll { width: 19px; height: 81px; margin-top: -7px; border-left: 1px solid #e4e4e4; background: #fafafa; }
.scroll i { display: block; width: 10px; height: 68px; margin: 4px 0 0 5px; border-radius: 5px; background: #c1c1c1; }

.table { margin: 5px 5px 0; height: 361px; border: 1.300px solid #cfd4d8; font-size: 17.300px; font-weight: 600; letter-spacing: -.15px; }
.row { display: grid; grid-template-columns: 41px 305px 131.500px 149px 101.500px 1fr; height: 26.500px; background: #fff; border-bottom: 1.300px solid #d8dcdf; }
.row > span { border-left: 1.300px solid #dcdfe2; padding: 2px 0 0 13px; display: flex; align-items: center; min-width: 0; }
.row > span:first-child { border-left: 0; }
.head { height: 42px; background: #f6f8fa; }
.row .idx { background: #f6f8fa; color: #5c7080; font-weight: 400; justify-content: flex-end; padding-right: 8px; }
.row .clip { padding-right: 12px; }
.clip s { overflow: hidden; white-space: nowrap; letter-spacing: .12px; }
.tags { gap: 3px; }
.tags i { width: 32px; height: 21px; border-radius: 4px; font-size: 14.500px; line-height: 21px; text-align: center; }
.tags .g { background: #c5e0cf; color: #2f8452; }
.tags .o { border: 1.800px solid #222; line-height: 17.500px; }
.tags .xy { width: 43px; }

.animator .tab { padding-right: 9px; }
.playback { display: flex; gap: 8px; padding: 13px 0 0 14px; }
.play { width: 381px; } .play > b { padding-left: 6px; }
.one { width: 39.500px; }
.rate { width: 240px; color: #182026; }
.rsel { width: 154px; padding: 0 14px 0 12px; display: flex; align-items: center; justify-content: space-between; color: #111; }
.rsel svg { width: 12px; height: 18px; fill: #5c7080; }
.num { width: 46px; background: #fff; border: solid #d3d7da; border-width: 0 1.300px; padding-left: 12px; display: flex; align-items: center; }
.spin { flex: 1; display: flex; flex-direction: column; color: #5c7080; }
.spin b { flex: 1; display: grid; place-items: center; }
.spin b + b { border-top: 1.300px solid #d3d7da; }
.spin svg { width: 18px; height: 18px; }
.anim { display: flex; padding-left: 13px; }
.radio { width: 22px; height: 22px; border-radius: 50%; border: 1.300px solid #ccd1d6; background: #fff; }
.radio.on { border: 6.500px solid #3a7cbd; }
.anim label { padding-left: 13px; width: 134.500px; line-height: 22px; }
.slider { position: relative; width: 304.500px; }
.track { margin-top: 5px; height: 9px; border-radius: 5px; background: #d5dade; }
.track.full { background: #3a7cbd; margin: 7px 0 0 -1px; }
.knob { position: absolute; top: -2px; width: 23px; height: 24px; margin-left: -11.500px; border-radius: 5px; background: #fbfcfd; border: 1.300px solid #c3c8cc; box-shadow: 0 1px 1px #0002; }
.half { position: absolute; top: 0; width: 13px; height: 24px; border: 1.300px solid #c3c8cc; background: #fbfcfd; }
.half.l { left: -14px; border-radius: 5px 0 0 5px; }
.half.r { left: 303px; border-radius: 0 5px 5px 0; }
.marks span { position: absolute; top: 27px; transform: translateX(-50%); font-size: 16.300px; }
.tip { position: absolute; top: 27px; transform: translateX(-50%); padding: 0 7.500px; height: 22px; line-height: 22px; font-size: 16.300px; color: #f0f4f7; background: #394b59; border-radius: 4px; box-shadow: 0 3px 16px #10161a33; }
.channel { margin-top: 15.500px; height: 77.500px; }
.channel pre { margin: 13.500px 0 0 21px; font: 13.400px/17.200px "Liberation Mono", monospace; letter-spacing: 0; color: #222; }
.range { padding-left: 169.500px; height: 56px; }
.range .tip { top: 28px; }
.pol .slant span { position: absolute; top: 35.500px; width: 100px; margin-left: -50px; text-align: center; transform: rotate(30deg); font-size: 16.800px; line-height: 20px; }
.pol .slant .sel-tip { width: 84px; height: 22px; line-height: 22px; margin-left: -42px; top: 34.500px; color: #f0f4f7; background: #394b59; border-radius: 4px; box-shadow: 0 3px 16px #10161a33; }

.dropdown { position: absolute; left: 1490px; top: 146.500px; width: 244.500px; padding: 7px 0; background: #fff; border-radius: 3px; box-shadow: 0 0 0 1px #10161a1a, 0 3px 5px #10161a33, 0 11px 32px #10161a33; }
.dropdown li { height: 40.700px; line-height: 41px; padding-left: 47.500px; position: relative; }
.dropdown svg { position: absolute; left: 17px; top: 11px; width: 20px; height: 20px; color: #5c7080; }
.arrow { position: absolute; width: 90px; height: 90px; overflow: visible; fill: #ec4291; stroke: #000; stroke-width: 5.500; }
.a1 { left: 1319px; top: 121px; }
.a2 { left: 1701px; top: 533.500px; transform: scaleX(-1); }
.callout { position: absolute; display: grid; place-items: center; background: #f8d959; color: #5b5b5b; font: bold 32px "Liberation Sans", sans-serif; letter-spacing: 0; }
.c1 { left: 1319px; top: 222px; width: 85px; height: 49px; }
.c2 { left: 1790px; top: 607px; width: 106px; height: 50px; }
```
FILE: main.js
```js
const byId = id => document.getElementById(id);

/* Raster: sum of elliptical gaussians [x, y, sigmaX, sigmaY, amplitude] in plot pixels */
const blobs = [
  [320,490,75,90,20],[295,470,30,35,14],[324,606,11,13,190],[316,575,20,24,62],[322,540,25,20,14],[322,655,12,12,20],[324,688,15,16,55],[326,725,32,35,20],
  [273,652,22,22,-85],[250,655,45,35,-22],[385,652,34,32,-50],[420,660,60,45,-22],[480,640,45,50,-16],[168,675,32,30,-20],[110,720,60,25,-10],
  [465,130,28,26,-50],[80,145,22,30,-38],[85,245,24,30,-26],[335,175,20,12,-14],[465,220,20,14,34],[130,270,22,20,10],[180,215,40,15,-12],
  [240,320,70,18,-12],[350,300,90,40,-8],[480,320,60,30,-8],[95,440,40,60,-5],[545,645,16,26,24],[525,580,50,30,-9],
  [110,995,16,28,34],[127,935,17,34,26],[240,920,28,45,12],[205,1137,24,22,50],[190,1160,18,14,18],[310,1096,15,17,38],[322,1130,16,30,18],[424,1108,20,26,26],
  [365,1003,38,26,22],[405,945,20,20,13],[345,900,30,18,11],[320,825,28,25,9],[75,1065,30,28,-40],[72,1163,24,16,-60],[160,1165,20,20,-20],
  [545,970,28,40,-22],[478,1015,20,35,-20],[525,1105,20,30,-28],[480,1150,35,16,-32],[380,1150,30,16,-25],[555,1095,14,25,34],[250,1150,14,14,-15]
];
const raster = byId('raster'), ctx = raster.getContext('2d');
const px = ctx.createImageData(61, 129);
for (let r = 0; r < 129; r++) for (let c = 0; c < 61; c++) {
  const x = 69.5 + (c + .5) * 8.17, y = 105.5 + (r + .5) * 8.2;
  let v = 91 + 4 * Math.sin(x / 31 + y / 47) * Math.cos(y / 23 - x / 61) + 2.5 * Math.sin(x / 17) * Math.sin(y / 29 + 1);
  for (const [bx, by, sx, sy, a] of blobs) v += a * Math.exp(-((x - bx) ** 2 / sx / sx + (y - by) ** 2 / sy / sy) / 2);
  const k = (r * 61 + c) * 4;
  px.data[k] = px.data[k + 1] = px.data[k + 2] = v;
  px.data[k + 3] = 255;
}
ctx.putImageData(px, 0, 0);

/* Sky axes */
let labels = '', ticks = '';
const rot = (x, y, t) => `<text transform="translate(${x} ${y}) rotate(-90)">${t}</text>`;
['54','52','50','48','46','44','42','13:16:40','38','36','34'].forEach((t, i) => { labels += rot(60, 158.8 + i * 94.2, t); });
['57.8','57.7','57.6','57.5','9:47:57.4','57.3','57.2','57.1'].forEach((t, i) => { labels += `<text x="${83.3 + i * 68.7}" y="1185">${t}</text>`; });
['0.12','0.09','0.06','0.03','0.00','-0.03','-0.06','-0.09'].forEach((t, i) => {
  labels += rot(615, 118.5 + i * 132.3, t);
  ticks += `M587 ${118.5 + i * 132.3}h8`;
});
for (let i = 0; i < 22; i++) { const y = 158.8 + i * 47.1, n = i % 2 ? 5 : 9; if (y < 1163) ticks += `M69.5 ${y}h${n}M568 ${y}h-${n}`; }
for (let i = 0; i < 36; i++) { const x = 83.3 + i * 13.74, n = i % 5 ? 5 : 9; ticks += `M${x} 1163v-${n}M${x} 106v${n}`; }
byId('skylabels').innerHTML = labels + `<path d="${ticks}" stroke="#4a7fb0" stroke-width="1.1" fill="none"/><path d="M69.500 105.500h498.500v1058h-498.500z" fill="none" stroke="#6f9cc6"/>`;
byId('handles').innerHTML += [[178,386],[322,386],[465.6,386],[178,547.5],[465.6,547.5],[178,709],[322,709],[465.6,709]]
  .map(([x, y]) => `<rect x="${x - 4.5}" y="${y - 4.5}" width="9" height="9"/>`).join('');

/* Profile grid */
let g = '<path class="grid" d="M749.7 168.300H2191.500V647H749.700Z"/>';
['1.00e-2','5.00e-3','0.00e+0','-5.00e-3','-1.00e-2','-1.50e-2','-2.00e-2'].forEach((t, i) => {
  const y = 177.3 + i * 74.45;
  g += `<path class="grid${i === 6 ? ' major' : ''}" d="M741 ${y}H2191.500"/><text x="736.500" y="${y + 5}" text-anchor="end">${t}</text>`;
});
['345.3','345.35','345.4','345.45','345.5','345.55'].forEach((t, i) => {
  const x = 849.6 + i * 268.2;
  g += `<path class="grid${i ? '' : ' major'}" d="M${x} 170V661"/><text x="${x}" y="680" text-anchor="middle">${t}</text>`;
});
byId('grid').innerHTML = g;

/* Spectra: one value per channel, in thirds of a plot pixel below zero */
const flat = n => Array.from({ length: n }, (_, i) => Math.round(Math.sin(i * 2.3 + n) * 5));
const su = [-7,8,15,-7,-13,8,-12,-4,-1,-17,1,-5,-4,3,3,2,-18,-11,3,-28,-246,-365,-343,-401,-328,-304,-23,-7,7,0,9,3,0,-13,-4,-17,...flat(11),3,-2,13,0,-13,10,-2,-20,6,-4,0,-6,-6,-2,-4,-4,-9,0,-6,11,2,5];
const sq = [13,8,0,15,-8,-4,-7,-2,-4,-1,7,-4,0,2,4,-18,9,16,62,14,89,-192,234,255,93,-87,-26,-21,6,-2,-4,-6,7,3,-5,10,...flat(11),-5,-4,-15,-15,-6,-2,-4,7,7,3,-10,0,-21,-9,-5,-13,-2,7,8,-9,-7,-2];
const sv = [-13,-11,-3,20,18,-2,14,-2,-2,9,1,-4,-9,2,13,9,9,4,109,202,901,880,538,627,820,473,179,5,5,-2,14,-9,0,3,0,-2,...flat(11),7,0,0,2,-8,-5,-10,3,-4,-2,11,-2,11,6,0,0,0,-2,-4,-6,28,2];
function steps(a) {
  let x = 757.5, d = '';
  a.forEach((v, i) => {
    const y = (325.7 + v / 3).toFixed(1), next = Math.min(768.5 + i * 20.94, 2183.5);
    d += `${i ? 'L' : 'M'}${x.toFixed(1)} ${y}H${next.toFixed(1)}`;
    x = next;
  });
  return d.replace(/L[\d.]+ ([\d.]+)/g, 'V$1');
}
byId('su').setAttribute('d', steps(su));
byId('sq').setAttribute('d', steps(sq));
byId('sv').setAttribute('d', steps(sv));
```
